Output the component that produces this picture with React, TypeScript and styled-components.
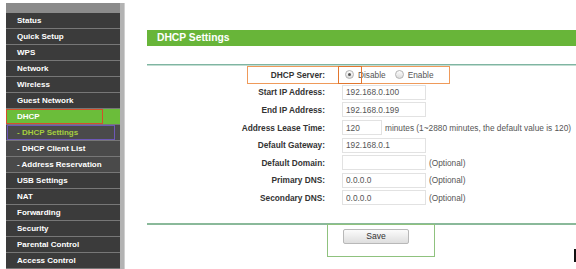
import styled, { createGlobalStyle } from "styled-components";

interface MenuEntry {
    label: string;
    sub?: boolean;
    active?: boolean;
    current?: boolean;
}

interface FieldRow {
    label: string;
    value?: string;
    short?: boolean;
    note?: string;
}

const menu: MenuEntry[] = [
    {label: "Status"},
    {label: "Quick Setup"},
    {label: "WPS"},
    {label: "Network"},
    {label: "Wireless"},
    {label: "Guest Network"},
    {label: "DHCP", active: true},
    {label: "- DHCP Settings", sub: true, current: true},
    {label: "- DHCP Client List", sub: true},
    {label: "- Address Reservation", sub: true},
    {label: "USB Settings"},
    {label: "NAT"},
    {label: "Forwarding"},
    {label: "Security"},
    {label: "Parental Control"},
    {label: "Access Control"},
];

const fields: FieldRow[] = [
    {label: "Start IP Address:", value: "192.168.0.100"},
    {label: "End IP Address:", value: "192.168.0.199"},
    {label: "Address Lease Time:", value: "120", short: true, note: "minutes (1~2880 minutes, the default value is 120)"},
    {label: "Default Gateway:", value: "192.168.0.1"},
    {label: "Default Domain:", value: "", note: "(Optional)"},
    {label: "Primary DNS:", value: "0.0.0.0", note: "(Optional)"},
    {label: "Secondary DNS:", value: "0.0.0.0", note: "(Optional)"},
];

export default function App() {
    return (
        <>
            <GlobalStyle/>
            <Page>
                <Sidebar>
                    <SidebarTop/>
                    {menu.map((m) => (
                        <MenuItem key={m.label} $sub={m.sub} $active={m.active} $current={m.current}>
                            {m.label}
                            {m.active && <Callout $color="#d3502b" $left={0} $width={97}/>}
                            {m.current && <Callout $color="#6d58b6" $left={1} $width={108}/>}
                        </MenuItem>
                    ))}
                </Sidebar>
                <Main>
                    <TitleBar>DHCP Settings</TitleBar>
                    <Rule/>
                    <Form>
                        <Row>
                            <Label>DHCP Server:</Label>
                            <Value>
                                <Radio $checked/>
                                <RadioText>Disable</RadioText>
                                <Radio/>
                                <RadioText>Enable</RadioText>
                            </Value>
                            <Callout $color="#ef9a5a" $left={100} $width={203}/>
                            <Callout $color="#e2762e" $left={191} $width={24}/>
                        </Row>
                        {fields.map((f) => (
                            <Row key={f.label}>
                                <Label>{f.label}</Label>
                                <Value>
                                    <Field $short={f.short} readOnly value={f.value}/>
                                    {f.note && <Note>{f.note}</Note>}
                                </Value>
                            </Row>
                        ))}
                    </Form>
                    <Footer>
                        <SaveButton>Save</SaveButton>
                        <Callout $color="#8fc27e" $left={180} $width={108} $top={-1} $height={33}/>
                    </Footer>
                </Main>
                <EdgeMark/>
            </Page>
        </>
    );
}

const GlobalStyle = createGlobalStyle`
    html, body {
        margin: 0;
        padding: 0;
        background: #ffffff;
    }
    body {
        font-family: "Liberation Sans", Arial, sans-serif;
    }
`

const Page = styled.div`
    position: relative;
    display: flex;
    width: 576px;
    height: 269px;
    overflow: hidden;
    background: #fff;
`

const Sidebar = styled.div`
    flex: 0 0 114px;
    margin: 3px 0 0 6px;
    border-right: 4px solid #b3b3b3;
    box-shadow: 1px 0 0 #d0d0d0;
    display: flex;
    flex-direction: column;
`

const SidebarTop = styled.div`
    height: 11px;
    background: #8b8b8b;
`

const MenuItem = styled.div<{ $sub?: boolean; $active?: boolean; $current?: boolean }>`
    position: relative;
    flex: 0 0 auto;
    height: 15px;
    line-height: 15px;
    padding-left: 11px;
    border-bottom: 1px solid #777;
    font-size: 8px;
    font-weight: 700;
    white-space: nowrap;
    color: ${({$current}) => ($current ? "#a6cf3e" : "#fff")};
    background: ${({$active, $sub}) => ($active ? "#6bbd3a" : $sub ? "#4a4a4a" : "#3b3b3b")};
`

const Callout = styled.span<{ $color: string; $left: number; $width: number; $top?: number; $height?: number }>`
    position: absolute;
    left: ${({$left}) => $left}px;
    width: ${({$width}) => $width}px;
    top: ${({$top}) => $top ?? 0}px;
    height: ${({$height}) => ($height ? `${$height}px` : "100%")};
    border: 1px solid ${({$color}) => $color};
    box-sizing: border-box;
    pointer-events: none;
`

const Main = styled.div`
    flex: 1;
    margin-left: 23px;
    display: flex;
    flex-direction: column;
`

const TitleBar = styled.div`
    margin-top: 30px;
    height: 16px;
    line-height: 16px;
    padding-left: 10px;
    background: #68b539;
    color: #fff;
    font-size: 10.3px;
    font-weight: 700;
`

const Rule = styled.div`
    margin-top: 18px;
    height: 1px;
    background: #7fb5a2;
    box-shadow: 0 1px 0 #c2ddd2;
`

const Form = styled.div`
    margin-top: 1px;
    display: flex;
    flex-direction: column;
`

const Row = styled.div`
    position: relative;
    display: flex;
    align-items: center;
    height: 17.6px;
`

const Label = styled.div`
    width: 178px;
    text-align: right;
    font-size: 8.3px;
    font-weight: 700;
    color: #333;
`

const Value = styled.div`
    margin-left: 17px;
    display: flex;
    align-items: center;
    font-size: 8.3px;
    color: #555;
`

const Radio = styled.span<{ $checked?: boolean }>`
    position: relative;
    width: 7px;
    height: 7px;
    margin-left: 3px;
    border: 1px solid #b4b4b4;
    border-radius: 50%;
    background: linear-gradient(#fdfdfd, #dcdcdc);

    &::after {
        content: "";
        display: ${({$checked}) => ($checked ? "block" : "none")};
        position: absolute;
        left: 2px;
        top: 2px;
        width: 3px;
        height: 3px;
        border-radius: 50%;
        background: #555;
    }
`

const RadioText = styled.span`
    margin: 0 6px 0 4px;
`

const Field = styled.input<{ $short?: boolean }>`
    box-sizing: border-box;
    width: ${({$short}) => ($short ? "40px" : "84px")};
    height: 15px;
    margin: 0;
    padding: 0 3px;
    border: 1px solid #e2e2e2;
    border-radius: 0;
    outline: none;
    background: #fff;
    font-family: "Liberation Sans", Arial, sans-serif;
    font-size: 8.3px;
    color: #555;
`

const Note = styled.span`
    margin-left: 3px;
    white-space: nowrap;
`

const Footer = styled.div`
    position: relative;
    margin-top: 16px;
    padding: 4px 0 0 196px;
    border-top: 2px solid #8ab99a;
`

const SaveButton = styled.button`
    display: block;
    width: 66px;
    height: 15px;
    padding: 0;
    border: 1px solid #b8b8b8;
    border-radius: 2px;
    background: linear-gradient(#fbfbfb, #dedede);
    font-family: "Liberation Sans", Arial, sans-serif;
    font-size: 8.6px;
    color: #333;
`

const EdgeMark = styled.div`
    position: absolute;
    right: 0;
    top: 249px;
    width: 2px;
    height: 13px;
    background: #111;
`
